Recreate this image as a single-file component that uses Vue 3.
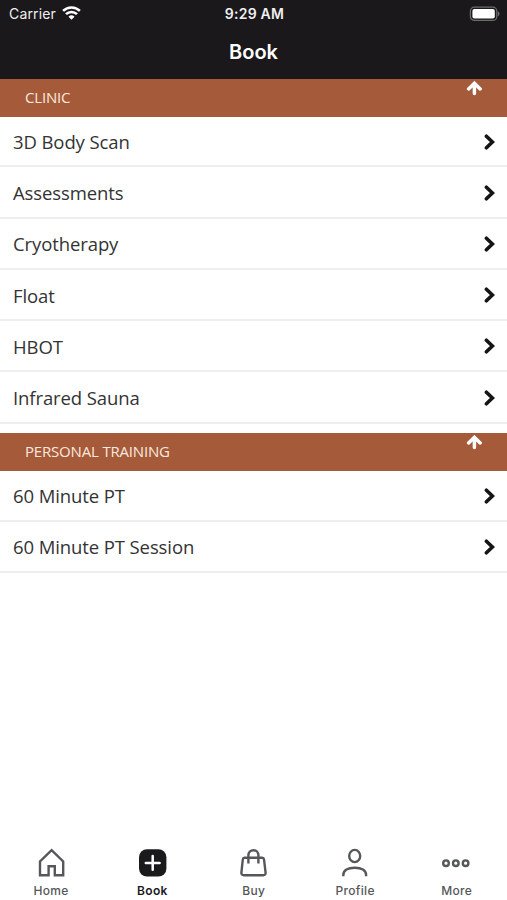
<template>
  <div class="app">
    <header class="header">
      <div class="status">
        <div class="carrier">
          <span>Carrier</span>
          <svg width="19" height="15" viewBox="0 0 19 15">
            <path d="M1.1 4.9 A12 12 0 0 1 17.9 4.9" />
            <path d="M4 8.2 A7.8 7.8 0 0 1 15 8.2" />
            <path class="dot" d="M9.5 13.8 L6.5 10.8 A4.3 4.3 0 0 1 12.5 10.8 Z" />
          </svg>
        </div>
        <span class="time">9:29 AM</span>
        <div class="battery">
          <svg width="31" height="16" viewBox="0 0 31 16">
            <rect x="1.4" y="1.2" width="26.4" height="13.2" rx="4" fill="none" stroke="#6b6a6c" stroke-width="1.3" />
            <rect x="3.4" y="3" width="22.4" height="9.6" rx="2" fill="#fff" />
            <path d="M28.9 5.2 Q30.6 6 30.6 7.8 Q30.6 9.6 28.9 10.4 Z" fill="#6b6a6c" />
          </svg>
        </div>
      </div>
      <h1 class="title">Book</h1>
    </header>

    <main class="content">
      <section v-for="section in sections" :key="section.name" class="section">
        <div class="section-header" @click="toggle(section)">
          <span>{{ section.name }}</span>
          <svg class="arrow" width="16" height="15" viewBox="0 0 16 15">
            <path d="M8.4 12.6 V3 M2.6 7.9 L8.4 2.3 L14.2 7.9" />
          </svg>
        </div>
        <ul v-if="section.open" class="list">
          <li v-for="item in section.items" :key="item" class="row">
            <span>{{ item }}</span>
            <svg class="chevron" width="12" height="16" viewBox="0 0 12 16">
              <path d="M2.4 2.2 L8.4 8 L2.4 13.8" />
            </svg>
          </li>
        </ul>
      </section>
    </main>

    <nav class="tabs">
      <button
        v-for="tab in tabs"
        :key="tab"
        class="tab"
        :class="{ active: tab === activeTab }"
        @click="activeTab = tab"
      >
        <svg width="30" height="30" viewBox="0 0 30 30">
          <path v-if="tab === 'Home'" d="M4 27.3 V13.4 L15.6 2.2 L27.2 13.4 V27.3 H18.8 V18.2 H12.6 V27.3 Z" />
          <template v-else-if="tab === 'Book'">
            <rect class="fill" x="2" y="1.2" width="27.4" height="27.4" rx="8" />
            <path class="plus" d="M15.7 8 V21.8 M8.8 14.9 H22.6" />
          </template>
          <template v-else-if="tab === 'Buy'">
            <path d="M5.5 9.8 H23.3 Q24.8 9.8 25 11.3 L26.6 24.5 Q26.8 27.2 24.2 27.2 H4.8 Q2.2 27.2 2.4 24.5 L3.8 11.3 Q4 9.8 5.5 9.8 Z" />
            <path d="M9.4 15.4 V7.2 A5 5 0 0 1 19.4 7.2 V15.4" />
          </template>
          <template v-else-if="tab === 'Profile'">
            <ellipse cx="14.7" cy="8" rx="5.5" ry="6.1" />
            <path d="M3.3 28.2 V27 C3.3 22.3 7.8 19.7 14.7 19.7 S26.1 22.3 26.1 27 V28.2" />
          </template>
          <template v-else>
            <circle cx="5" cy="15.2" r="2.8" />
            <circle cx="14.8" cy="15.2" r="2.8" />
            <circle cx="24.6" cy="15.2" r="2.8" />
          </template>
        </svg>
        <span>{{ tab }}</span>
      </button>
    </nav>
  </div>
</template>

<script setup>
import { ref } from 'vue';

const sections = ref([
  {
    name: 'CLINIC',
    open: true,
    items: ['3D Body Scan', 'Assessments', 'Cryotherapy', 'Float', 'HBOT', 'Infrared Sauna'],
  },
  {
    name: 'PERSONAL TRAINING',
    open: true,
    items: ['60 Minute PT', '60 Minute PT Session'],
  },
]);

const tabs = ['Home', 'Book', 'Buy', 'Profile', 'More'];
const activeTab = ref('Book');

const toggle = (section) => {
  section.open = !section.open;
};
</script>

<style>
body {
  margin: 0;
  background: #fff;
}
</style>

<style scoped>
.app {
  display: flex;
  flex-direction: column;
  height: 100vh;
  overflow: hidden;
  background: #fff;
  font-family: "Open Sans", "Noto Sans", sans-serif;
}
.header {
  flex: none;
  height: 79px;
  background: #1a181a;
  color: #fff;
  font-family: Inter, sans-serif;
}
.status {
  display: grid;
  grid-template-columns: 1fr auto 1fr;
  align-items: center;
  height: 27px;
  padding: 0 7px 0 9px;
  font-size: 14px;
  color: #f0eff0;
}
.carrier {
  display: flex;
  align-items: center;
  gap: 6px;
  letter-spacing: 0.15px;
}
.carrier path {
  fill: none;
  stroke: #fff;
  stroke-width: 2.6;
}
.carrier .dot {
  fill: #fff;
  stroke: none;
}
.time {
  font-weight: 600;
  letter-spacing: 0.25px;
}
.battery {
  display: flex;
  justify-content: flex-end;
}
.title {
  margin: 0;
  font-size: 20px;
  font-weight: 600;
  line-height: 51px;
  text-align: center;
}
.content {
  flex: 1;
}
.section {
  margin-bottom: 9.6px;
}
.section-header {
  display: flex;
  justify-content: space-between;
  height: 38px;
  padding: 0 25px;
  background: #a55a3a;
  color: #fbe9df;
  font-size: 15px;
  line-height: 37px;
  letter-spacing: -0.18px;
}
.arrow {
  margin-top: 2px;
}
.arrow path {
  fill: none;
  stroke: #fff;
  stroke-width: 3.5;
  stroke-linecap: round;
}
.list {
  margin: 0;
  padding: 0;
  list-style: none;
}
.row {
  display: flex;
  align-items: center;
  justify-content: space-between;
  box-sizing: border-box;
  height: 51.25px;
  padding: 1px 11px 0 13px;
  border-bottom: 2px solid #eeeeee;
  color: #333;
  font-size: 18.5px;
  letter-spacing: -0.1px;
}
.row:first-child {
  height: 50.4px;
}
.chevron path {
  fill: none;
  stroke: #151515;
  stroke-width: 3.6;
  stroke-linecap: round;
}
.tabs {
  display: flex;
  flex: none;
  height: 52px;
}
.tab {
  display: flex;
  flex: 1;
  flex-direction: column;
  align-items: center;
  gap: 5px;
  padding: 0;
  border: 0;
  background: none;
  color: #55575a;
  font-family: Inter, sans-serif;
  font-size: 12px;
  font-weight: 500;
  line-height: 15px;
  letter-spacing: 0.3px;
}
.tab span {
  padding-left: 0.5px;
}
.tab svg {
  fill: none;
  stroke: #55575a;
  stroke-width: 2.4;
}
.tab .fill {
  fill: #1a1a1c;
  stroke: none;
}
.tab .plus {
  stroke: #fff;
  stroke-width: 2.5;
  stroke-linecap: round;
}
.active {
  color: #1a1a1c;
  font-weight: 600;
}
</style>
